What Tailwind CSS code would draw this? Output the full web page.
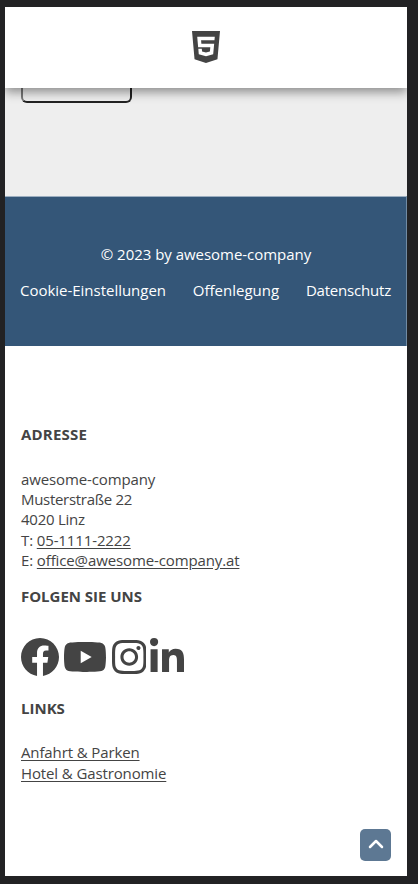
<!DOCTYPE html>
<html lang="de">
<head>
<meta charset="utf-8">
<title>awesome-company</title>
<script src="https://cdn.jsdelivr.net/npm/@tailwindcss/browser@4"></script>
</head>
<body class="h-[884px] overflow-hidden bg-[#222224] pt-[7px] pl-[5px] font-['Open_Sans','Noto_Sans',sans-serif] text-[15px] text-[#444]">
<div class="relative flex h-[869px] w-[402px] flex-col overflow-hidden bg-white">
  <header class="z-10 flex h-[81px] shrink-0 justify-center bg-white pt-[24px] pr-px shadow-[0_4px_10px_rgba(0,0,0,0.42)]">
    <svg class="h-[32px] w-[28px]" viewBox="0 32 384 448" preserveAspectRatio="none" fill="#444"><path d="M0 32l34.9 395.8L191.5 480l157.6-52.2L384 32H0zm308.2 127.9H124.4l4.1 49.4h175.6l-13.6 148.4-97.9 27v.3h-1.1l-98.7-27.3-6-75.8h47.7L138 320l53.5 14.500 53.700-14.500 6-62.200H84.300L71.500 112.200h241.100l-4.400 47.700z"/></svg>
  </header>
  <main class="h-[108px] shrink-0 bg-[#eee] pl-[16px]">
    <div class="h-[15px] w-[111px] rounded-b-[6px] border-2 border-t-0 border-[#222] border-l-[#777]"></div>
  </main>
  <section class="h-[150px] shrink-0 border-t border-r border-[#9caec0] border-r-[#718ba4] bg-[#345678] px-[15px] pt-[47px] text-white">
    <p class="pl-px text-center leading-[20px] tracking-[-0.03px]">© 2023 by awesome-company</p>
    <nav class="mt-[16px] flex justify-between leading-[20px]"><a class="tracking-[-0.02px]">Cookie-Einstellungen</a><a>Offenlegung</a><a class="tracking-[-0.2px]">Datenschutz</a></nav>
  </section>
  <footer class="px-[16px] pt-[78px] leading-[20.25px]">
    <h2 class="font-bold tracking-[0.2px]">ADRESSE</h2>
    <address class="mt-[24.500px] tracking-[-0.12px] not-italic whitespace-nowrap">
      <p>awesome-company</p>
      <p class="tracking-[-0.3px]">Musterstraße 22</p>
      <p class="tracking-[-0.25px]">4020 Linz</p>
      <p>T: <a class="underline underline-offset-2">05-1111-2222</a></p>
      <p>E: <a class="underline underline-offset-2">office@awesome-company.at</a></p>
    </address>
    <h2 class="mt-[15.500px] font-bold tracking-[-0.03px]">FOLGEN SIE UNS</h2>
    <div class="mt-[32px] flex h-[40px] items-start text-[#444]">
      <svg class="h-[38px] w-[38px]" viewBox="8 8 496 493" preserveAspectRatio="none" fill="currentColor"><path d="M504 256C504 119 393 8 256 8S8 119 8 256c0 123.780 90.690 226.380 209.250 245V327.690h-63V256h63v-54.640c0-62.150 37-96.480 93.670-96.480 27.140 0 55.520 4.840 55.520 4.840v61h-31.280c-30.800 0-40.410 19.120-40.410 38.730V256h68.780l-11 71.690h-57.780V501C413.310 482.380 504 379.780 504 256z"/></svg>
      <svg class="mt-[4px] ml-[5px] h-[30px] w-[42px]" viewBox="14.900 64 546.200 384" preserveAspectRatio="none" fill="currentColor"><path d="M549.655 124.083c-6.281-23.650-24.787-42.276-48.284-48.597C458.781 64 288 64 288 64S117.220 64 74.629 75.486c-23.497 6.322-42.003 24.947-48.284 48.597-11.412 42.867-11.412 132.305-11.412 132.305s0 89.438 11.412 132.305c6.281 23.650 24.787 41.500 48.284 47.821C117.220 448 288 448 288 448s170.780 0 213.371-11.486c23.497-6.321 42.003-24.171 48.284-47.821 11.412-42.867 11.412-132.305 11.412-132.305s0-89.438-11.412-132.305zm-317.510 213.508V175.185l142.739 81.205-142.739 81.201z"/></svg>
      <svg class="mt-[2px] ml-[5.500px] h-[34px] w-[34.500px]" viewBox="0 32 448 448" preserveAspectRatio="none" fill="currentColor"><path d="M224.100 141c-63.600 0-114.900 51.300-114.900 114.900s51.300 114.900 114.900 114.900S339 319.500 339 255.900 287.700 141 224.100 141zm0 189.600c-41.100 0-74.700-33.500-74.700-74.700s33.500-74.700 74.700-74.700 74.700 33.500 74.700 74.700-33.600 74.700-74.700 74.700zm146.400-194.300c0 14.900-12 26.800-26.800 26.800-14.900 0-26.800-12-26.800-26.800s12-26.800 26.800-26.800 26.800 12 26.800 26.800zm76.100 27.200c-1.700-35.900-9.900-67.700-36.200-93.900-26.200-26.200-58-34.400-93.900-36.200-37-2.100-147.900-2.100-184.900 0-35.800 1.700-67.600 9.900-93.900 36.100s-34.400 58-36.200 93.900c-2.100 37-2.100 147.900 0 184.900 1.700 35.900 9.900 67.700 36.200 93.900s58 34.400 93.900 36.200c37 2.100 147.900 2.100 184.900 0 35.900-1.700 67.700-9.900 93.900-36.200 26.200-26.200 34.400-58 36.200-93.900 2.100-37 2.100-147.800 0-184.800zM398.800 388c-7.800 19.600-22.900 34.700-42.600 42.600-29.500 11.700-99.500 9-132.100 9s-102.700 2.600-132.100-9c-19.600-7.800-34.700-22.900-42.600-42.600-11.700-29.500-9-99.500-9-132.100s-2.600-102.700 9-132.100c7.800-19.600 22.900-34.700 42.600-42.600 29.500-11.700 99.500-9 132.100-9s102.700-2.600 132.100 9c19.600 7.800 34.700 22.900 42.600 42.600 11.700 29.500 9 99.500 9 132.100s2.700 102.700-9 132.100z"/></svg>
      <svg class="ml-[4px] h-[34px] w-[34px]" viewBox="0 0 448 448" preserveAspectRatio="none" fill="currentColor"><path d="M100.280 448H7.400V148.900h92.880zM53.790 108.100C24.090 108.100 0 83.500 0 53.800a53.790 53.790 0 0 1 107.580 0c0 29.700-24.100 54.300-53.790 54.300zM447.900 448h-92.680V302.400c0-34.700-.7-79.200-48.290-79.200-48.290 0-55.690 37.700-55.690 76.700V448h-92.780V148.900h89.080v40.800h1.300c12.400-23.500 42.690-48.300 87.880-48.300 94 0 111.280 61.900 111.280 142.300V448z"/></svg>
    </div>
    <h2 class="mt-[20px] font-bold">LINKS</h2>
    <nav class="mt-[24px] flex flex-col items-start leading-[20.500px] tracking-[-0.12px]"><a class="underline underline-offset-2">Anfahrt &amp; Parken</a><a class="underline underline-offset-2">Hotel &amp; Gastronomie</a></nav>
  </footer>
  <button class="absolute right-[16px] bottom-[15px] flex h-[32px] w-[31px] items-center justify-center rounded-[5px] bg-[#5d7893]" aria-label="Nach oben">
    <svg class="mb-[2px] h-[10px] w-[16px]" viewBox="0 0 16 10" fill="none" stroke="#fff" stroke-width="2.500" stroke-linecap="round" stroke-linejoin="round"><path d="M2 8l6-6 6 6"/></svg>
  </button>
</div>
</body>
</html>
